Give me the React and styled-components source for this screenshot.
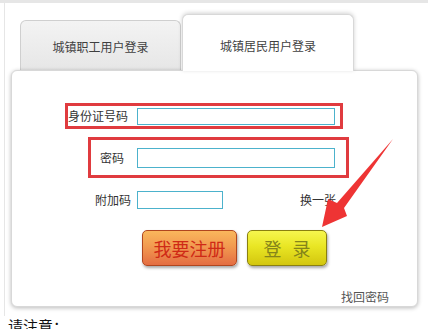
import React from 'react';
import styled, { createGlobalStyle } from 'styled-components';

const GlobalStyle = createGlobalStyle`
  html, body {
    margin: 0;
    padding: 0;
    background: #fff;
  }
  body {
    font-family: "Noto Sans CJK SC", "Noto Sans", sans-serif;
  }
`;

const Page = styled.div`
  width: 428px;
  height: 329px;
  overflow: hidden;
  background: #fff;
  border-top: 3px solid #e6e6e6;
  box-sizing: border-box;
`;

const Frame = styled.div`
  margin-left: 4px;
  width: 420px;
  height: 313px;
  box-sizing: border-box;
  border-left: 1px solid #e6e6e6;
  padding: 11px 0 0 6px;
`;

const TabBar = styled.div`
  display: flex;
  align-items: flex-end;
  height: 57px;
  padding-left: 9px;
  margin-bottom: -1px;
  position: relative;
`;

const Tab = styled.div`
  box-sizing: border-box;
  width: ${p => (p.$active ? '172px' : '161px')};
  height: ${p => (p.$active ? '57px' : '51px')};
  margin-left: ${p => (p.$active ? '1px' : '0')};
  padding-top: ${p => (p.$active ? '22px' : '17px')};
  text-align: center;
  font-size: 12px;
  line-height: 18px;
  color: #3f3f3f;
  border: 1px solid ${p => (p.$active ? '#d8d8d8' : '#cfcfcf')};
  border-bottom: none;
  border-radius: 6px 6px 0 0;
  background: ${p => (p.$active ? '#fff' : 'linear-gradient(#f3f3f3, #e6e6e6)')};
  box-shadow: ${p => (p.$active ? '0 -1px 4px rgba(0,0,0,0.18)' : 'none')};
  position: relative;
  z-index: ${p => (p.$active ? 2 : 0)};
`;

const Panel = styled.div`
  position: relative;
  z-index: 1;
  box-sizing: border-box;
  width: 407px;
  height: 237px;
  border: 1px solid #d8d8d8;
  border-radius: 6px;
  background: #fff;
  box-shadow: 0 1px 4px rgba(0, 0, 0, 0.28);
  padding-top: 32px;
  display: flex;
  flex-direction: column;
  align-items: flex-start;
`;

const Row = styled.div`
  box-sizing: border-box;
  display: flex;
  align-items: center;
  margin-left: ${p => p.$left}px;
  margin-top: ${p => p.$top || 0}px;
  width: ${p => (p.$width ? `${p.$width}px` : 'auto')};
  height: ${p => p.$height}px;
  padding-left: ${p => p.$pad || 0}px;
  border: ${p => (p.$boxed ? '3px solid #e03b3f' : 'none')};
`;

const Label = styled.span`
  font-size: 12px;
  line-height: 16px;
  color: #333;
  white-space: nowrap;
`;

const Input = styled.div`
  box-sizing: border-box;
  margin-left: ${p => p.$gap}px;
  width: ${p => p.$w}px;
  height: ${p => p.$h}px;
  border: 1px solid #4cb2cc;
  background: #fff;
`;

const Refresh = styled.span`
  margin-left: 77px;
  font-size: 12px;
  line-height: 16px;
  color: #333;
`;

const Buttons = styled.div`
  display: flex;
  gap: 10px;
  margin-left: 130px;
  margin-top: 21px;
`;

const Button = styled.div`
  box-sizing: border-box;
  height: 36px;
  width: ${p => (p.$primary ? '80px' : '95px')};
  border-radius: 5px;
  display: flex;
  align-items: center;
  justify-content: center;
  font-size: 18px;
  word-spacing: ${p => (p.$primary ? '7px' : '0')};
  color: ${p => (p.$primary ? '#85841a' : '#cf2a16')};
  border: 1px solid ${p => (p.$primary ? '#8a8010' : '#b0461e')};
  background: ${p =>
    p.$primary
      ? 'linear-gradient(#f6f64e, #e9e624 45%, #d3c60e)'
      : 'linear-gradient(#f9b75c, #f29a50 45%, #e46d42)'};
  box-shadow: 1px 2px 3px rgba(0, 0, 0, 0.35);
`;

const Forgot = styled.span`
  margin-left: 329px;
  margin-top: 23px;
  font-size: 12px;
  line-height: 16px;
  color: #555;
`;

const Arrow = styled.svg`
  position: absolute;
  left: -12px;
  top: -71px;
  pointer-events: none;
`;

const Notice = styled.div`
  padding-left: 8px;
  margin-top: 2px;
  font-size: 15px;
  line-height: 15px;
  color: #111;
`;

export default function App() {
  return (
    <Page>
      <GlobalStyle />
      <Frame>
        <TabBar>
          <Tab>城镇职工用户登录</Tab>
          <Tab $active>城镇居民用户登录</Tab>
        </TabBar>
        <Panel>
          <Row $boxed $left={53} $width={278} $height={26}>
            <Label>身份证号码</Label>
            <Input $gap={9} $w={198} $h={17} />
          </Row>
          <Row $boxed $left={76} $top={8} $width={261} $height={41} $pad={9}>
            <Label>密码</Label>
            <Input $gap={13} $w={198} $h={20} />
          </Row>
          <Row $left={83} $top={13} $height={18}>
            <Label>附加码</Label>
            <Input $gap={6} $w={86} $h={18} />
            <Refresh>换一张</Refresh>
          </Row>
          <Buttons>
            <Button>我要注册</Button>
            <Button $primary>登 录</Button>
          </Buttons>
          <Forgot>找回密码</Forgot>
          <Arrow width="428" height="329" viewBox="0 0 428 329">
            <polygon
              points="393,139 344,208 347,216 322,227 328,199 337,203"
              fill="#ee3434"
            />
          </Arrow>
        </Panel>
      </Frame>
      <Notice>请注意：</Notice>
    </Page>
  );
}
